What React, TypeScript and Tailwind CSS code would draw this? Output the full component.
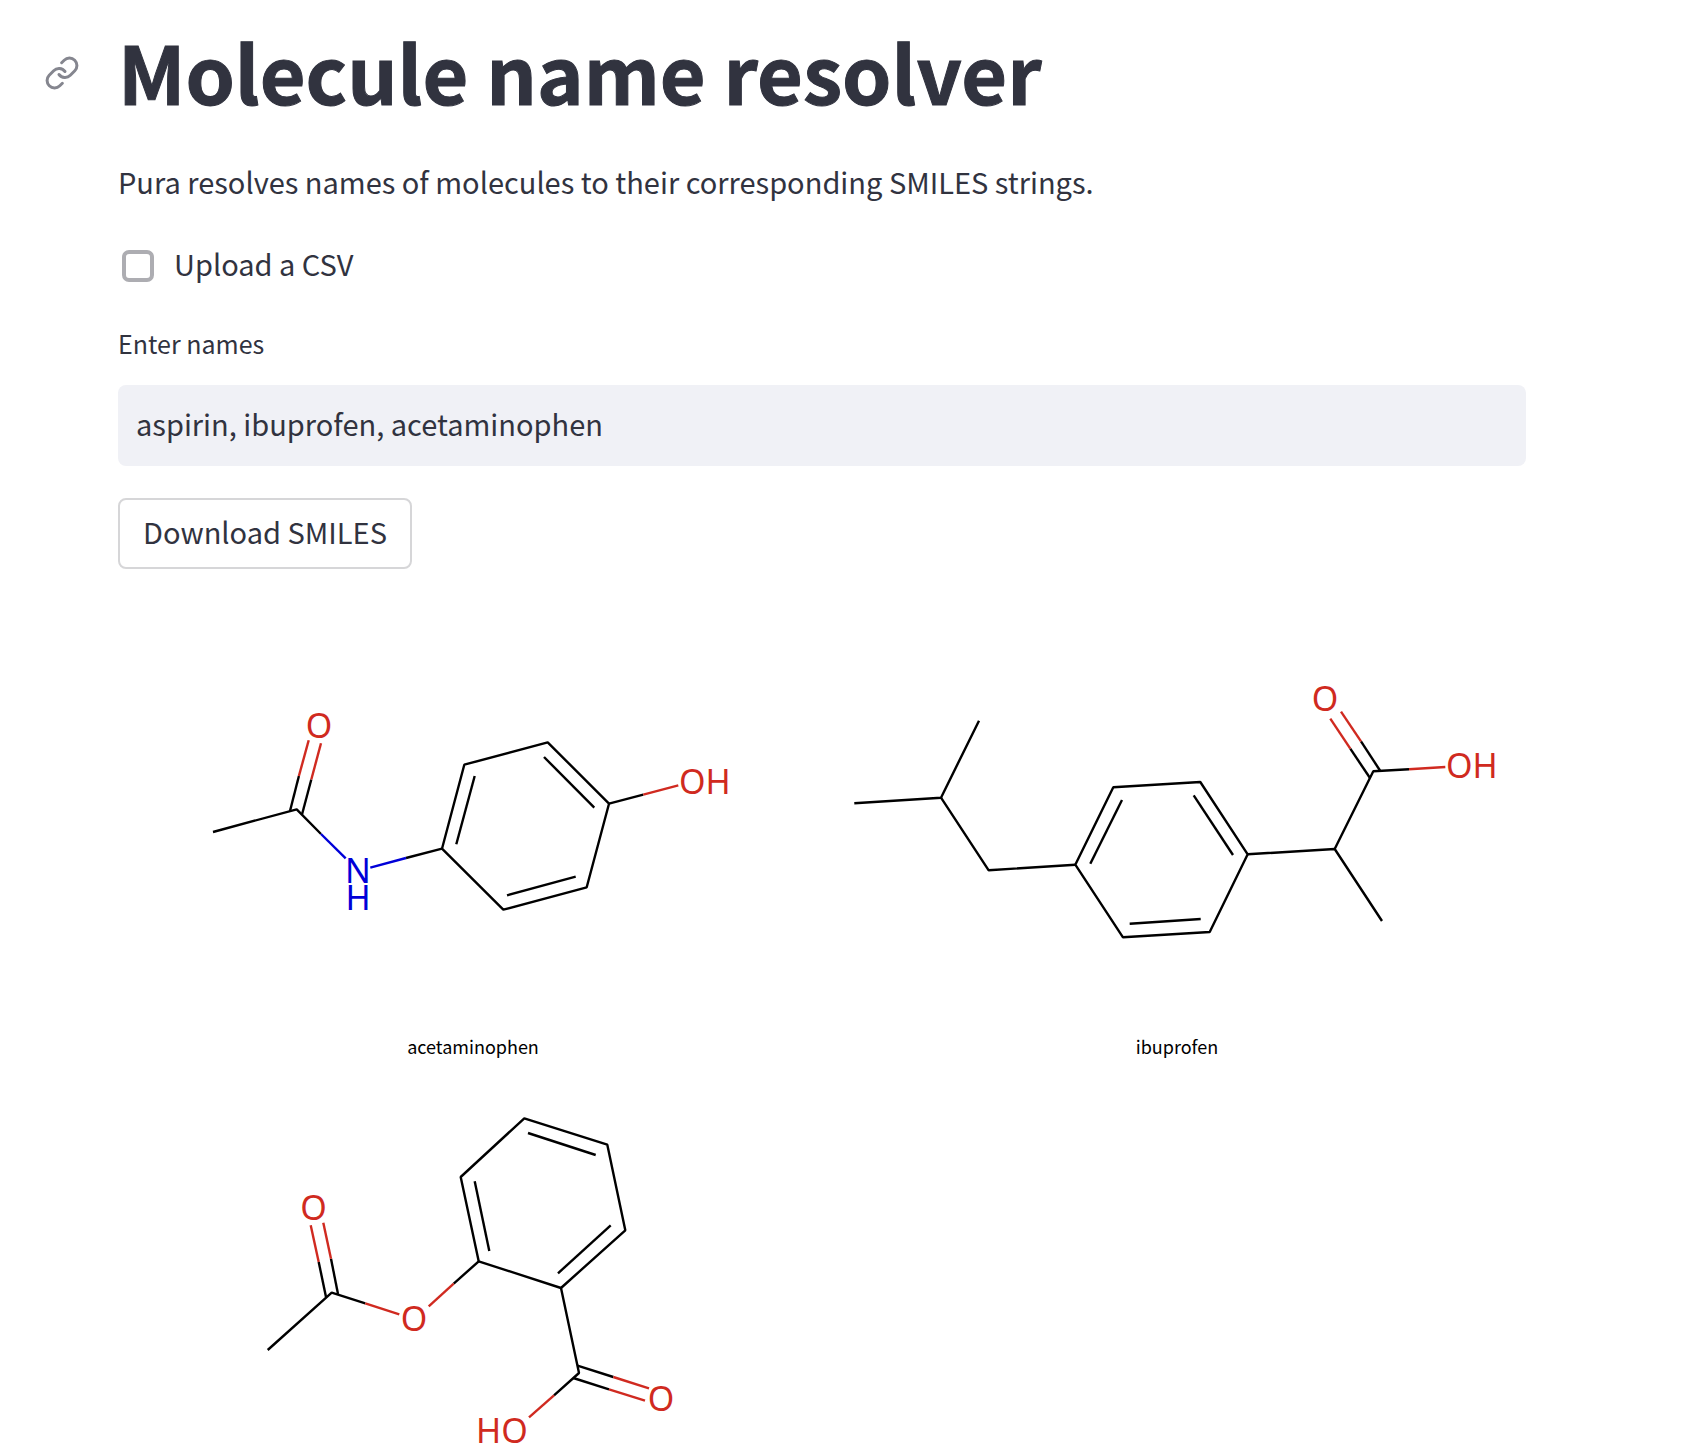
import { useState, type ReactNode } from "react";

type Point = [number, number];

const BLACK = "#000000";
const RED = "#d02a20";
const BLUE = "#0000d8";

function Bond({ points, color = BLACK }: { points: Point[]; color?: string }) {
  return (
    <polyline
      points={points.map((p) => p.join(",")).join(" ")}
      fill="none"
      stroke={color}
      strokeWidth={2.4}
      strokeLinejoin="bevel"
    />
  );
}

/* A bond whose second half takes the hetero atom's colour. */
function HalfBond({ from, mid, to, color = RED }: { from: Point; mid: Point; to: Point; color?: string }) {
  return (
    <>
      <Bond points={[from, mid]} />
      <Bond points={[mid, to]} color={color} />
    </>
  );
}

function Atom({ x, y, label, color = RED, start = false }: { x: number; y: number; label: string; color?: string; start?: boolean }) {
  return (
    <text x={x} y={y} fill={color} textAnchor={start ? "start" : "middle"} className="font-['Noto_Sans',sans-serif] text-[34px]">
      {label}
    </text>
  );
}

function Molecule({ name, viewBox, caption = true, children }: { name: string; viewBox: string; caption?: boolean; children: ReactNode }) {
  return (
    <figure>
      <svg viewBox={viewBox} role="img" aria-label={name} className="block w-full">
        {children}
      </svg>
      {caption && <figcaption className="pl-1.5 text-center text-[18px] leading-8 text-black">{name}</figcaption>}
    </figure>
  );
}

function Acetaminophen() {
  return (
    <Molecule name="acetaminophen" viewBox="118 640 704 390">
      <Bond points={[[213, 832], [296.7, 809.3], [321, 834]]} />
      <Bond points={[[321, 834], [345.7, 858.3]]} color={BLUE} />
      <HalfBond from={[290, 811]} mid={[298.9, 776]} to={[308.7, 740.3]} />
      <HalfBond from={[302, 814.5]} mid={[311.3, 779.5]} to={[321, 743.3]} />
      <HalfBond from={[442, 848.7]} mid={[406, 858]} to={[370.3, 867.7]} color={BLUE} />
      <Bond points={[[442, 848.7], [464.3, 764.7], [547.7, 742.3], [609, 803.7], [586.7, 887.3], [503.3, 909.7], [442, 848.7], [464.3, 764.7]]} />
      <Bond points={[[456.3, 844.3], [474.7, 776]]} />
      <Bond points={[[544, 757], [594.3, 807.7]]} />
      <Bond points={[[507, 895.3], [575.7, 876.7]]} />
      <HalfBond from={[609, 803.7]} mid={[643.3, 794.7]} to={[678.3, 785.3]} />
      <Atom x={319} y={738} label="O" />
      <Atom x={358} y={883} label="N" color={BLUE} />
      <Atom x={358} y={910} label="H" color={BLUE} />
      <Atom x={679} y={794} label="OH" start />
    </Molecule>
  );
}

function Ibuprofen() {
  return (
    <Molecule name="ibuprofen" viewBox="822 640 704 390">
      <Bond points={[[854.3, 803.3], [941, 797.7], [979, 720.7]]} />
      <Bond points={[[941, 797.7], [988.7, 870.3], [1075.3, 864.7]]} />
      <Bond points={[[1075.3, 864.7], [1113.3, 787.3], [1200.3, 782], [1247.7, 854.3], [1209.7, 932], [1123, 937.3], [1075.3, 864.7], [1113.3, 787.3]]} />
      <Bond points={[[1090.3, 863.7], [1122, 800]]} />
      <Bond points={[[1129.7, 923.7], [1200.7, 919]]} />
      <Bond points={[[1193.7, 795.3], [1233, 855]]} />
      <Bond points={[[1247.7, 854.3], [1334.7, 849], [1382, 921]]} />
      <Bond points={[[1334.7, 849], [1373.3, 771.3], [1409, 769.3]]} />
      <Bond points={[[1409, 769.3], [1445.3, 767]]} color={RED} />
      <HalfBond from={[1380, 770.5]} mid={[1361, 741.3]} to={[1341, 711.7]} />
      <HalfBond from={[1370, 778]} mid={[1350.3, 748.7]} to={[1330.3, 718.7]} />
      <Atom x={1325} y={711} label="O" />
      <Atom x={1446} y={778} label="OH" start />
    </Molecule>
  );
}

function Aspirin() {
  return (
    <Molecule name="aspirin" viewBox="118 1078 704 368" caption={false}>
      <Bond points={[[267.7, 1350], [331.7, 1292.7], [365.3, 1303.3]]} />
      <Bond points={[[365.3, 1303.3], [399.3, 1314.3]]} color={RED} />
      <HalfBond from={[326, 1297]} mid={[318.7, 1262]} to={[310.7, 1225.3]} />
      <HalfBond from={[338, 1294]} mid={[331, 1258.7]} to={[323.3, 1222.7]} />
      <HalfBond from={[478.7, 1261.3]} mid={[453.7, 1283.7]} to={[428.7, 1306.3]} />
      <Bond points={[[478.7, 1261.3], [460.7, 1177], [524.3, 1118.3], [607.3, 1144.7], [625.3, 1230.3], [561, 1288], [478.7, 1261.3], [460.7, 1177]]} />
      <Bond points={[[474.7, 1181.3], [489.3, 1251]]} />
      <Bond points={[[528, 1133], [595.7, 1155]]} />
      <Bond points={[[610.7, 1225.3], [558, 1273.3]]} />
      <Bond points={[[561, 1288], [579, 1373], [554, 1395.3]]} />
      <Bond points={[[554, 1395.3], [529, 1417.3]]} color={RED} />
      <HalfBond from={[577.5, 1365.7]} mid={[613.3, 1377]} to={[649, 1388.3]} />
      <HalfBond from={[573.3, 1378]} mid={[609, 1389.3]} to={[645, 1400.7]} />
      <Atom x={313.5} y={1220} label="O" />
      <Atom x={414} y={1331} label="O" />
      <Atom x={661} y={1411} label="O" />
      <Atom x={476} y={1443} label="HO" start />
    </Molecule>
  );
}

function LinkIcon() {
  return (
    <svg viewBox="0 0 24 24" fill="none" stroke="currentColor" strokeWidth={2} strokeLinecap="round" strokeLinejoin="round" className="size-9" aria-hidden="true">
      <path d="M10 13a5 5 0 0 0 7.54.54l3-3a5 5 0 0 0-7.07-7.07l-1.72 1.71" />
      <path d="M14 11a5 5 0 0 0-7.54-.54l-3 3a5 5 0 0 0 7.07 7.07l1.71-1.71" />
    </svg>
  );
}

export default function App() {
  const [upload, setUpload] = useState(false);
  const [names, setNames] = useState("aspirin, ibuprofen, acetaminophen");

  return (
    <main className="bg-white pt-5 pr-[174px] pl-[118px] font-['Noto_Sans_CJK_SC',sans-serif] text-[29px] text-[#31333f]">
      <div className="-ml-[74px] flex items-center">
        <a href="#molecule-name-resolver" aria-label="Link to this heading" className="w-[74px] shrink-0 pt-1 text-[#85868f]">
          <LinkIcon />
        </a>
        <h1 id="molecule-name-resolver" className="text-[79px] leading-[102px] font-bold [-webkit-text-stroke:1px]">
          Molecule name resolver
        </h1>
      </div>

      <p className="mt-[35px] leading-[48px]">
        Pura resolves names of molecules to their corresponding SMILES strings.
      </p>

      <div className="mt-[41px] ml-1 flex h-10 items-center gap-5">
        <input
          id="upload"
          type="checkbox"
          checked={upload}
          onChange={(e) => setUpload(e.target.checked)}
          className="size-8 appearance-none rounded-[7px] border-4 border-[#adadb2] checked:bg-[#ff4b4b]"
        />
        <label htmlFor="upload" className="pb-1.5 leading-9">
          Upload a CSV
        </label>
      </div>

      <label htmlFor="names" className="mt-[37px] block text-[25px] leading-10">
        Enter names
      </label>
      <input
        id="names"
        type="text"
        value={names}
        onChange={(e) => setNames(e.target.value)}
        className="mt-[22px] block h-[81px] w-full rounded-lg bg-[#f0f1f6] px-[18px] pb-1.5 outline-none"
      />

      <button type="button" className="mt-8 block h-[71px] rounded-lg border-2 border-[#d6d6d8] bg-white px-[23px] pb-1">
        Download SMILES
      </button>

      <section aria-label="Resolved molecules" className="mt-[71px] grid grid-cols-2 gap-y-4">
        <Acetaminophen />
        <Ibuprofen />
        <Aspirin />
      </section>
    </main>
  );
}
